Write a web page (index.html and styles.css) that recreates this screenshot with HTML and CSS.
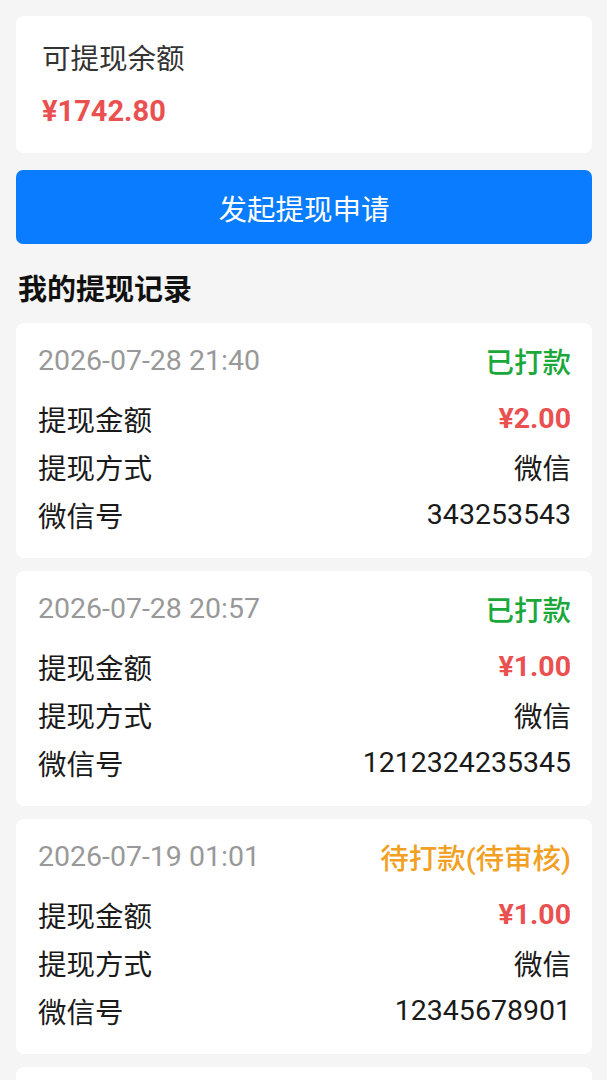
FILE: index.html
```html
<!DOCTYPE html>
<html lang="zh-CN">
<head>
<meta charset="utf-8">
<title>提现</title>
<link rel="stylesheet" href="styles.css">
</head>
<body>
<div class="page">
  <div class="balance-card">
    <div class="balance-label">可提现余额</div>
    <div class="balance-amount">¥1742.80</div>
  </div>
  <button class="apply-btn">发起提现申请</button>
  <div class="section-title">我的提现记录</div>
  <div class="records">
    <div class="record">
      <div class="record-head">
        <span class="date">2026-07-28 21:40</span>
        <span class="status paid">已打款</span>
      </div>
      <div class="row"><span>提现金额</span><span class="money">¥2.00</span></div>
      <div class="row"><span>提现方式</span><span>微信</span></div>
      <div class="row"><span>微信号</span><span>343253543</span></div>
    </div>
    <div class="record">
      <div class="record-head">
        <span class="date">2026-07-28 20:57</span>
        <span class="status paid">已打款</span>
      </div>
      <div class="row"><span>提现金额</span><span class="money">¥1.00</span></div>
      <div class="row"><span>提现方式</span><span>微信</span></div>
      <div class="row"><span>微信号</span><span>1212324235345</span></div>
    </div>
    <div class="record">
      <div class="record-head">
        <span class="date">2026-07-19 01:01</span>
        <span class="status pending">待打款(待审核)</span>
      </div>
      <div class="row"><span>提现金额</span><span class="money">¥1.00</span></div>
      <div class="row"><span>提现方式</span><span>微信</span></div>
      <div class="row"><span>微信号</span><span>12345678901</span></div>
    </div>
    <div class="record record-peek"></div>
  </div>
</div>
</body>
</html>
```
FILE: styles.css
```css
html, body {
  margin: 0;
  padding: 0;
  background: #f5f5f5;
}
body {
  font-family: Roboto, "Noto Sans CJK SC", sans-serif;
  color: #1a1a1a;
  font-size: 28.5px;
  overflow: hidden;
  height: 1080px;
}
.page {
  padding: 16px 15px 0 16px;
  display: flex;
  flex-direction: column;
}
.balance-card {
  background: #fff;
  border-radius: 8px;
  padding: 24px 26px 22px;
  display: flex;
  flex-direction: column;
}
.balance-label {
  line-height: 40px;
  color: #333;
}
.balance-amount {
  margin-top: 11px;
  line-height: 40px;
  font-size: 29px;
  font-weight: 700;
  color: #ea5050;
}
.apply-btn {
  margin-top: 17px;
  height: 74px;
  border: none;
  border-radius: 7px;
  background: #0a7cff;
  color: #fff;
  font-family: Roboto, "Noto Sans CJK SC", sans-serif;
  font-size: 28.5px;
  padding: 0;
}
.section-title {
  margin-top: 26px;
  line-height: 40px;
  font-size: 29px;
  font-weight: 700;
  padding-left: 2px;
  color: #111;
}
.records {
  margin-top: 13px;
  display: flex;
  flex-direction: column;
  gap: 13px;
}
.record {
  background: #fff;
  border-radius: 8px;
  padding: 20px 21px 20px 22px;
  display: flex;
  flex-direction: column;
}
.record-peek {
  height: 60px;
  padding: 0;
}
.record-head {
  display: flex;
  justify-content: space-between;
  align-items: center;
  height: 34px;
  margin-bottom: 17px;
}
.date {
  color: #999;
  font-size: 28.5px;
}
.status {
  font-weight: 500;
}
.status.paid {
  color: #1aa83a;
}
.status.pending {
  color: #f2a023;
}
.row {
  display: flex;
  justify-content: space-between;
  align-items: center;
  height: 48px;
}
.row span:last-child {
  font-size: 28.5px;
}
.money {
  font-weight: 700;
  color: #ea5050;
}
```
